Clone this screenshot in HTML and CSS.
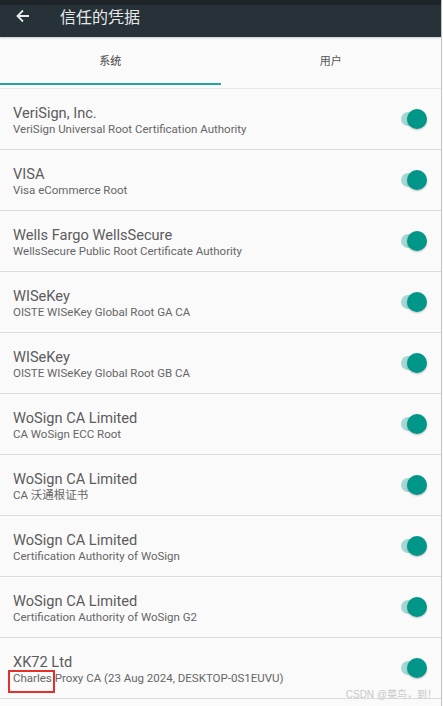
FILE: index.html
```html
<!DOCTYPE html>
<html lang="zh-CN">
<head>
    <meta charset="UTF-8">
    <meta name="viewport" content="width=device-width, initial-scale=1.0">
    <title>信任的凭据</title>
    <link rel="stylesheet" href="styles.css">
</head>
<body>
    <div class="app">
        <div class="statusbar"></div>
        <div class="toolbar">
            <svg class="back" width="14" height="14" viewBox="0 0 14 14">
                <path d="M13 7H2M7 1.5L1.5 7 7 12.5" fill="none" stroke="#e8eaeb" stroke-width="1.8"/>
            </svg>
            <span class="title">信任的凭据</span>
        </div>

        <div class="tabs">
            <div class="tab active">系统</div>
            <div class="tab">用户</div>
        </div>

        <div class="list">
            <div class="row">
                <div class="text">
                    <div class="name">VeriSign, Inc.</div>
                    <div class="sub">VeriSign Universal Root Certification Authority</div>
                </div>
                <div class="switch"><span class="knob"></span></div>
            </div>
            <div class="row">
                <div class="text">
                    <div class="name">VISA</div>
                    <div class="sub">Visa eCommerce Root</div>
                </div>
                <div class="switch"><span class="knob"></span></div>
            </div>
            <div class="row">
                <div class="text">
                    <div class="name">Wells Fargo WellsSecure</div>
                    <div class="sub">WellsSecure Public Root Certificate Authority</div>
                </div>
                <div class="switch"><span class="knob"></span></div>
            </div>
            <div class="row">
                <div class="text">
                    <div class="name">WISeKey</div>
                    <div class="sub">OISTE WISeKey Global Root GA CA</div>
                </div>
                <div class="switch"><span class="knob"></span></div>
            </div>
            <div class="row">
                <div class="text">
                    <div class="name">WISeKey</div>
                    <div class="sub">OISTE WISeKey Global Root GB CA</div>
                </div>
                <div class="switch"><span class="knob"></span></div>
            </div>
            <div class="row">
                <div class="text">
                    <div class="name">WoSign CA Limited</div>
                    <div class="sub">CA WoSign ECC Root</div>
                </div>
                <div class="switch"><span class="knob"></span></div>
            </div>
            <div class="row">
                <div class="text">
                    <div class="name">WoSign CA Limited</div>
                    <div class="sub">CA 沃通根证书</div>
                </div>
                <div class="switch"><span class="knob"></span></div>
            </div>
            <div class="row">
                <div class="text">
                    <div class="name">WoSign CA Limited</div>
                    <div class="sub">Certification Authority of WoSign</div>
                </div>
                <div class="switch"><span class="knob"></span></div>
            </div>
            <div class="row">
                <div class="text">
                    <div class="name">WoSign CA Limited</div>
                    <div class="sub">Certification Authority of WoSign G2</div>
                </div>
                <div class="switch"><span class="knob"></span></div>
            </div>
            <div class="row">
                <div class="text">
                    <div class="name">XK72 Ltd</div>
                    <div class="sub"><span class="mark">Charles</span> Proxy CA (23 Aug 2024, DESKTOP-0S1EUVU)</div>
                </div>
                <div class="switch"><span class="knob"></span></div>
            </div>
        </div>

        <div class="watermark">CSDN @菜鸟，到！</div>
    </div>
</body>
</html>
```

FILE: styles.css
```css
body {
    margin: 0;
    background: #fafafa;
    font-family: Roboto, "Noto Sans CJK SC", sans-serif;
    overflow: hidden;
}
.app {
    position: relative;
    width: 441px;
    height: 706px;
    border-right: 1px solid #c4c4c4;
    background: #fafafa;
    overflow: hidden;
}
.statusbar {
    height: 5px;
    background: #1d2327;
}
.toolbar {
    height: 32px;
    background: #263238;
    display: flex;
    align-items: center;
    padding-left: 16px;
    box-shadow: 0 1px 2px rgba(0, 0, 0, 0.2);
}
.back {
    margin-top: -10px;
}
.title {
    margin-left: 30px;
    margin-top: -10px;
    color: #e6e8e9;
    font-size: 16px;
    font-family: "Noto Sans CJK SC", sans-serif;
}
.tabs {
    display: flex;
    padding-bottom: 3px;
    border-bottom: 1px solid #e8e8e8;
}
.tab {
    flex: 1;
    height: 46px;
    display: flex;
    align-items: center;
    justify-content: center;
    font-size: 11px;
    color: #555;
    border-bottom: 2px solid transparent;
    font-family: "Noto Sans CJK SC", sans-serif;
}
.tab.active {
    border-bottom-color: #26a69a;
    color: #444;
}
.row {
    display: flex;
    align-items: center;
    height: 60px;
    border-bottom: 1px solid #dcdcdc;
    padding: 0 14px 0 13px;
}
.text {
    flex: 1;
    padding-top: 3px;
}
.name {
    font-size: 14.6px;
    line-height: 16px;
    color: #5c5c5c;
}
.sub {
    margin-top: 1px;
    font-size: 11.5px;
    line-height: 14px;
    color: #666;
}
.mark {
    position: relative;
}
.mark::after {
    content: "";
    position: absolute;
    left: -5px;
    right: -3px;
    top: -1px;
    bottom: -8px;
    border: 2px solid #e2312b;
}
.switch {
    position: relative;
    width: 26px;
    height: 20px;
}
.switch::before {
    content: "";
    position: absolute;
    left: 0;
    top: 3px;
    width: 22px;
    height: 14px;
    border-radius: 7px;
    background: #a6d8d3;
}
.knob {
    position: absolute;
    right: 0;
    top: 0;
    width: 20px;
    height: 20px;
    border-radius: 50%;
    background: #009688;
    box-shadow: 0 1px 2px rgba(0, 0, 0, 0.25);
}
.watermark {
    position: absolute;
    right: 4px;
    bottom: 5px;
    font-size: 10px;
    color: #c9c9c9;
    font-family: "Liberation Sans", "Noto Sans CJK SC", sans-serif;
}
```
